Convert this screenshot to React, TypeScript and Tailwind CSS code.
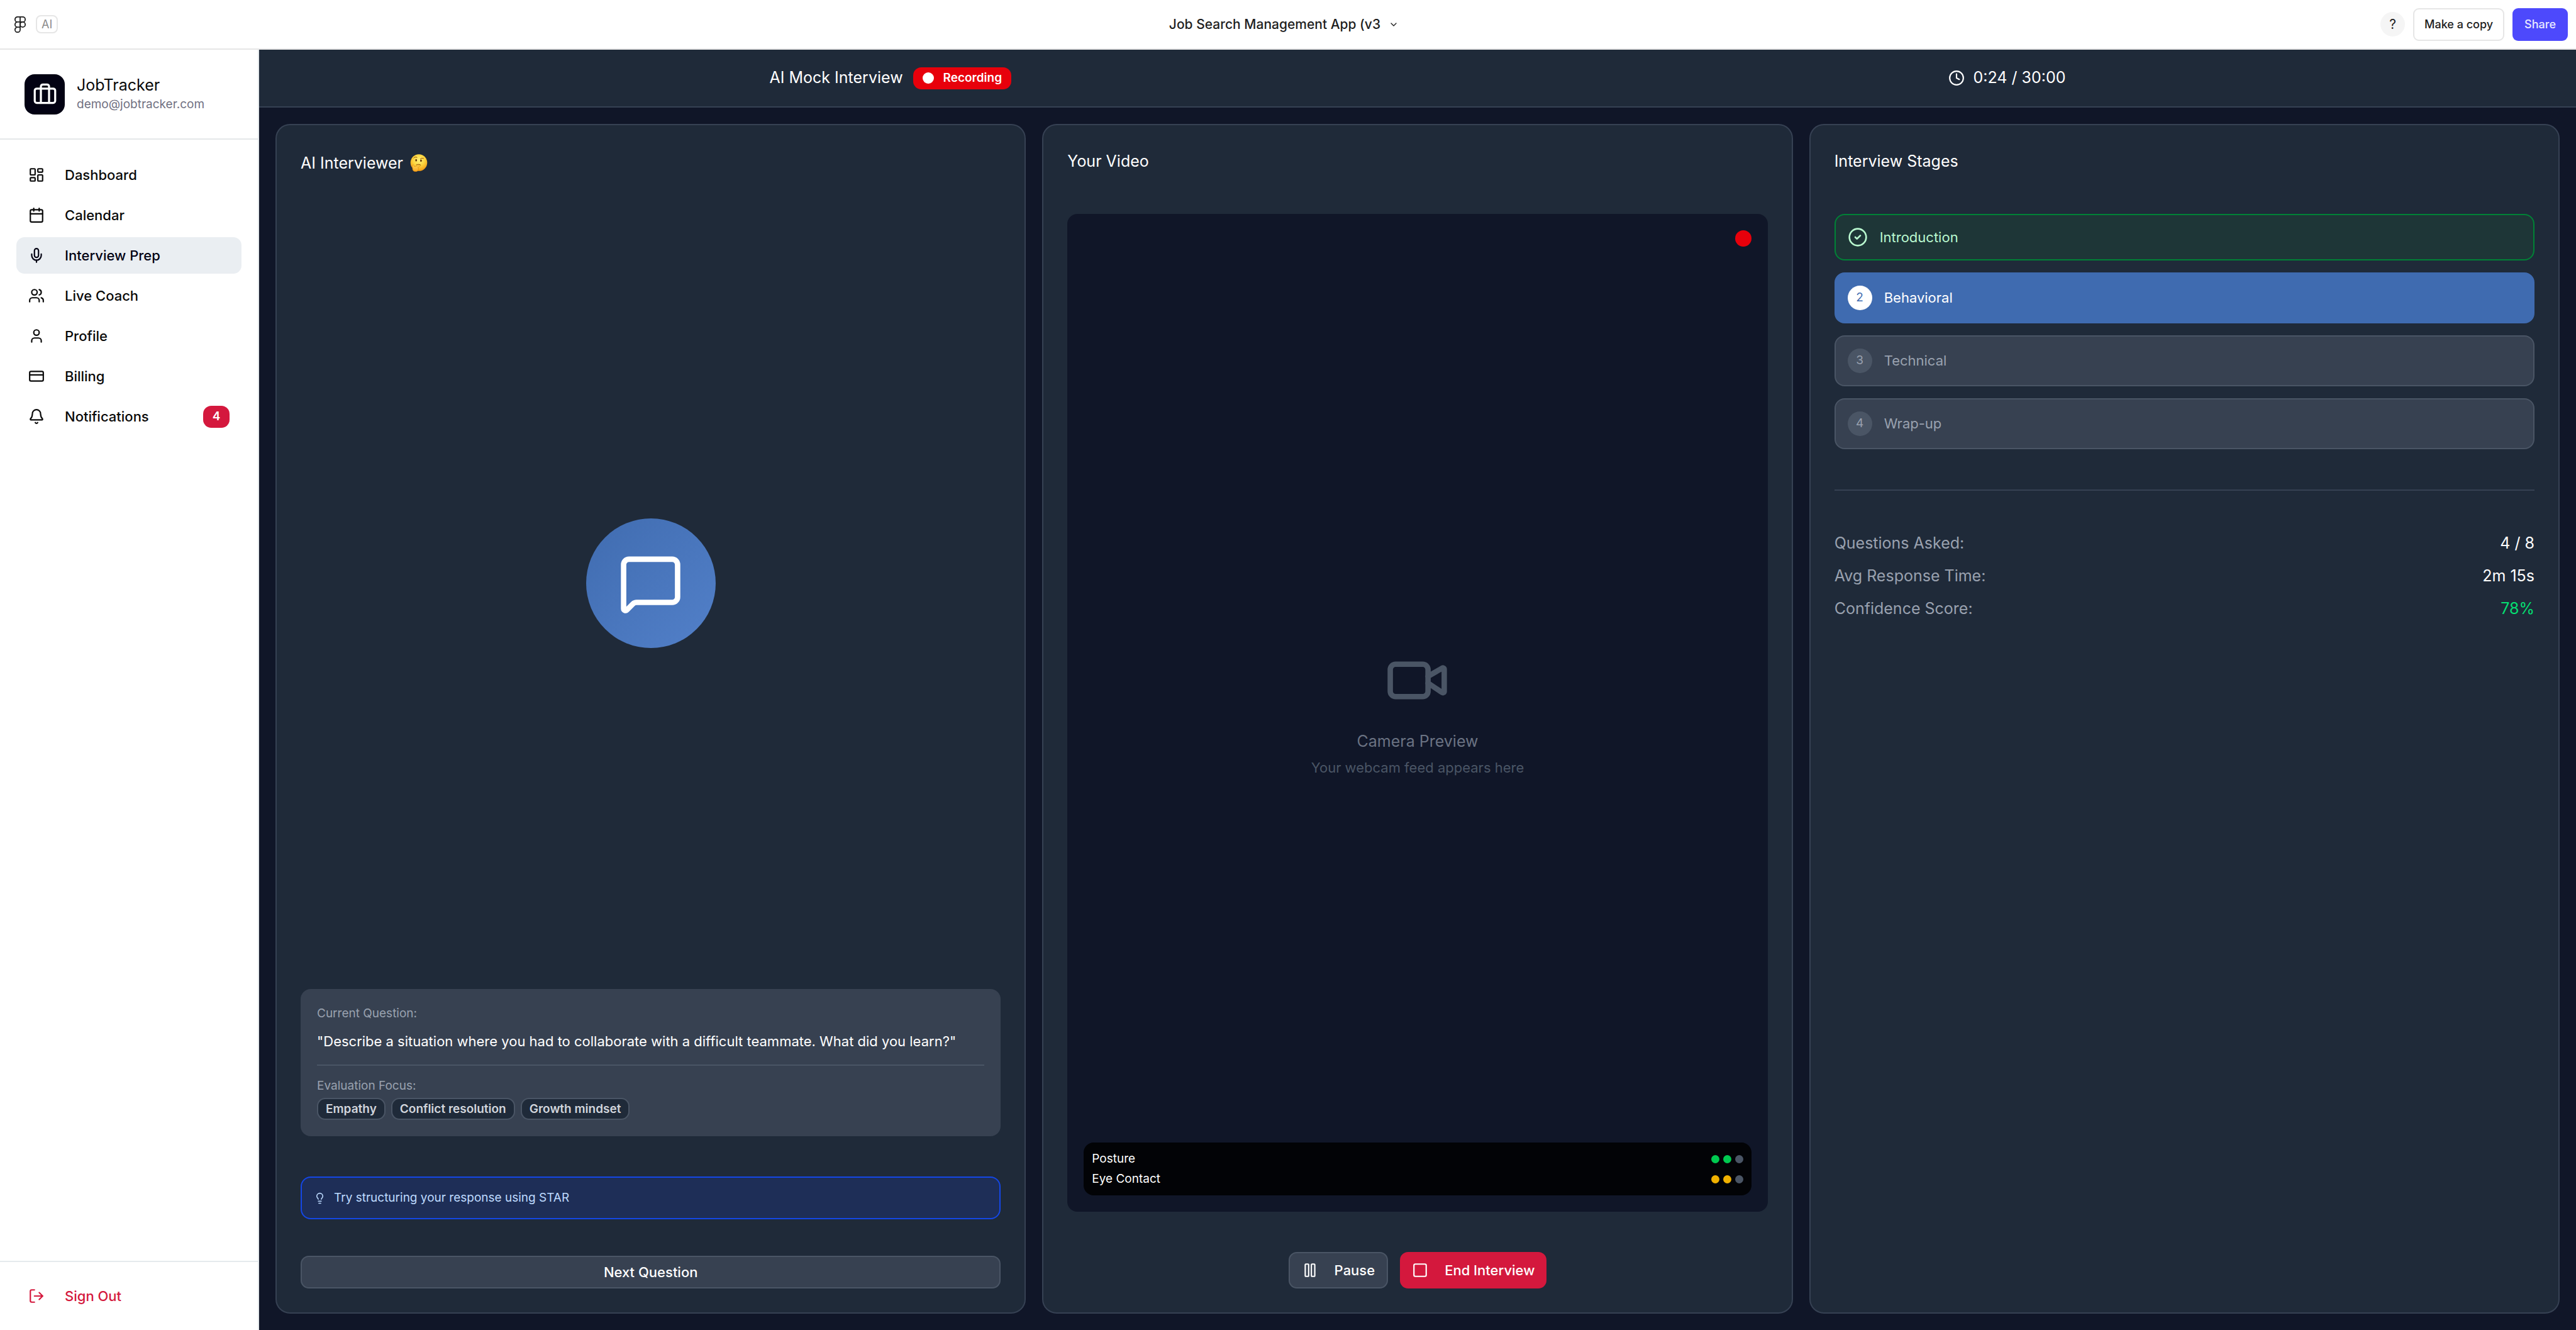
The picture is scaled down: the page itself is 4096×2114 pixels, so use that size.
import React from "react";
import {
  Bell,
  Briefcase,
  Calendar,
  ChevronDown,
  CircleCheck,
  Clock,
  CreditCard,
  LayoutDashboard,
  Lightbulb,
  LogOut,
  MessageSquare,
  Mic,
  Pause,
  Square,
  User,
  Users,
  Video,
} from "lucide-react";

const navItems = [
  { label: "Dashboard", Icon: LayoutDashboard },
  { label: "Calendar", Icon: Calendar },
  { label: "Interview Prep", Icon: Mic, active: true },
  { label: "Live Coach", Icon: Users },
  { label: "Profile", Icon: User },
  { label: "Billing", Icon: CreditCard },
  { label: "Notifications", Icon: Bell, badge: 4 },
];

function FigmaMark() {
  return (
    <svg className="h-[26px] w-[18px]" viewBox="0 0 22 32" fill="none" stroke="#1e1e1e" strokeWidth="2.2" aria-hidden="true">
      <path d="M11 1H6a5 5 0 0 0 0 10h5zM11 1h5a5 5 0 0 1 0 10h-5zM11 11H6a5 5 0 0 0 0 10h5zM11 21H6a5 5 0 1 0 5 5z" />
      <circle cx="16" cy="16" r="5" />
    </svg>
  );
}

function ThinkingFace() {
  return (
    <svg className="h-[28px] w-[28px]" viewBox="0 0 28 28" role="img" aria-label="Thinking face">
      <defs>
        <radialGradient id="face" cx="0.5" cy="0.35" r="0.65">
          <stop offset="0" stopColor="#fff27a" />
          <stop offset="0.55" stopColor="#fdd33c" />
          <stop offset="1" stopColor="#f59a12" />
        </radialGradient>
        <linearGradient id="hand" x1="0" y1="0" x2="0" y2="1">
          <stop offset="0" stopColor="#ffd95a" />
          <stop offset="1" stopColor="#f9a21b" />
        </linearGradient>
      </defs>
      <circle cx="14" cy="13.500" r="13.300" fill="url(#face)" />
      <path d="M5.800 6.200c1.200-1.700 3.300-2 5.200-1M16.500 7.400c1.600-1 3.500-1.200 5-.6" fill="none" stroke="#8a4b0b" strokeWidth="1" strokeLinecap="round" />
      <ellipse cx="9.700" cy="9.700" rx="1.400" ry="1.900" fill="#6b3a08" />
      <ellipse cx="17.400" cy="10.300" rx="1.400" ry="1.900" fill="#6b3a08" />
      <path d="M10 17c2-1.200 5-1 6.800.2" fill="none" stroke="#8a4b0b" strokeWidth="1" strokeLinecap="round" />
      <path d="M4.200 17.500c.7-.9 1.800-.6 2.100.5l.5 1.700c2.500-.3 5.600-1.300 8.200-2 1.400-.3 1.800 1.200.6 1.800l-3.300 1.600c1.300.8 1.300 2.200.8 3.300-.5 2-1.800 3.300-4.200 3.300-3 0-4.900-1.600-4.900-4.400 0-2 .1-4.100.2-5.800z" fill="url(#hand)" stroke="#e08a10" strokeWidth="0.700" />
    </svg>
  );
}

function TopBar() {
  return (
    <header className="grid h-[79px] grid-cols-3 items-center border-b-2 border-[#e6e6e6] bg-white px-[13px]">
      <div className="flex items-center gap-[16px] pl-[10px]">
        <FigmaMark />
        <span className="rounded-[8px] border-2 border-[#e6e6e6] px-[7px] text-[18px] leading-[25px] text-[#8c8c8c]">AI</span>
      </div>
      <button className="flex items-center justify-center gap-[13px] pr-[13px] text-[21px] font-medium text-[#1e1e1e]">
        Job Search Management App (v3
        <ChevronDown className="h-[16px] w-[16px]" />
      </button>
      <div className="flex items-center justify-end gap-[13px]">
        <button className="h-[39px] w-[39px] rounded-full bg-[#f5f5f5] text-[21px] text-[#1e1e1e]">?</button>
        <button className="h-[52px] rounded-[9px] border-2 border-[#e6e6e6] px-[16px] text-[18px] font-medium text-[#1e1e1e]">Make a copy</button>
        <button className="h-[52px] rounded-[9px] bg-[#4d49fc] px-[19px] text-[18px] font-medium text-[#e9e9ff]">Share</button>
      </div>
    </header>
  );
}

function Sidebar() {
  return (
    <aside className="flex w-[412px] shrink-0 flex-col border-r-2 border-[#e5eaed] bg-white">
      <div className="flex items-center gap-[19px] border-b-2 border-[#e5e7e9] p-[39px] pb-[38px]">
        <div className="flex h-[64px] w-[64px] items-center justify-center rounded-[16px] bg-[#030213] text-white">
          <Briefcase className="h-[39px] w-[39px]" />
        </div>
        <div>
          <div className="text-[25px] leading-[32px] text-[#0a0a0a]">JobTracker</div>
          <div className="text-[19px] leading-[30px] text-[#717182]">demo@jobtracker.com</div>
        </div>
      </div>
      <nav className="flex flex-1 flex-col gap-[6px] px-[26px] pt-[27px]">
        {navItems.map(({ label, Icon, active, badge }) => (
          <a
            key={label}
            href="#"
            className={
              active
                ? "flex h-[58px] items-center gap-[32px] rounded-[13px] bg-[#eaeef2] px-[19px] text-[#030213]"
                : "flex h-[58px] items-center gap-[32px] rounded-[13px] px-[19px] text-[#0a0a0a]"
            }
          >
            <Icon className="h-[26px] w-[26px]" />
            <span className="flex-1 text-[22px] font-medium">{label}</span>
            {badge && (
              <span className="flex h-[35px] w-[42px] items-center justify-center rounded-[13px] bg-[#d4183d] text-[19px] font-semibold text-white">
                {badge}
              </span>
            )}
          </a>
        ))}
      </nav>
      <div className="border-t-2 border-[#e5eaed] px-[26px] py-[25px]">
        <button className="flex h-[58px] w-full items-center gap-[32px] px-[19px] text-[#d4183d]">
          <LogOut className="h-[26px] w-[26px]" />
          <span className="text-[22px] font-medium">Sign Out</span>
        </button>
      </div>
    </aside>
  );
}

function Card({ title, extra, children }: { title: string; extra?: React.ReactNode; children: React.ReactNode }) {
  return (
    <section className="flex flex-col rounded-[23px] border-2 border-[#364153] bg-[#1f2a39] px-[38px] pb-[38px]">
      <h2 className="flex items-center gap-[11px] pt-[40px] pb-[67px] text-[25px] leading-[34px] text-white">
        {title}
        {extra}
      </h2>
      {children}
    </section>
  );
}

function InterviewerCard() {
  return (
    <Card title="AI Interviewer" extra={<span className="flex h-[40px] items-center"><ThinkingFace /></span>}>
      <div className="flex flex-1 items-center justify-center">
        <div className="flex h-[206px] w-[206px] items-center justify-center rounded-full bg-linear-to-br from-[#406cb0] to-[#5280c9] text-white">
          <MessageSquare className="h-[103px] w-[103px]" />
        </div>
      </div>
      <div className="mt-[64px] rounded-[16px] bg-[#374151] p-[26px]">
        <p className="text-[19px] leading-[26px] text-[#99a1af]">Current Question:</p>
        <p className="mt-[13px] text-[22px] leading-[37px] text-white">
          "Describe a situation where you had to collaborate with a difficult teammate. What did you learn?"
        </p>
        <div className="mt-[18px] border-t-2 border-[#4a5565] pt-[19px]">
          <p className="text-[19px] leading-[26px] text-[#99a1af]">Evaluation Focus:</p>
          <div className="mt-[6px] flex gap-[9px]">
            {["Empathy", "Conflict resolution", "Growth mindset"].map((tag) => (
              <span key={tag} className="rounded-[13px] border-2 border-[#4a5565] bg-[#1f2a39] px-[12px] text-[19px] leading-[31px] font-semibold text-[#d1d5dc]">
                {tag}
              </span>
            ))}
          </div>
        </div>
      </div>
      <div className="mt-[64px] flex h-[68px] items-center gap-[13px] rounded-[16px] border-2 border-[#1447e6] bg-[#1e2e57] px-[19px] text-[19px] text-[#bedbff]">
        <Lightbulb className="h-[19px] w-[19px]" />
        Try structuring your response using STAR
      </div>
      <button className="mt-[58px] h-[52px] rounded-[13px] border-2 border-[#4a5565] bg-[#374151] text-[22px] font-medium text-white">
        Next Question
      </button>
    </Card>
  );
}

const metrics = [
  { label: "Posture", dots: ["bg-[#00c950]", "bg-[#00c950]", "bg-[#4a5565]"] },
  { label: "Eye Contact", dots: ["bg-[#f0b100]", "bg-[#f0b100]", "bg-[#4a5565]"] },
];

function VideoCard() {
  return (
    <Card title="Your Video">
      <div className="relative flex flex-1 flex-col items-center justify-center rounded-[16px] bg-[#101628]">
        <Video className="h-[103px] w-[103px] text-[#4a5565]" />
        <p className="mt-[26px] text-[25px] leading-[39px] text-[#6a7282]">Camera Preview</p>
        <p className="mt-[6px] text-[22px] leading-[32px] text-[#4a5565]">Your webcam feed appears here</p>
        <span className="absolute top-[26px] right-[26px] h-[26px] w-[26px] rounded-full bg-[#e7000b]" />
        <div className="absolute right-[26px] bottom-[26px] left-[26px] rounded-[16px] bg-[#020306] px-[13px] py-[10px]">
          {metrics.map(({ label, dots }) => (
            <div key={label} className="flex items-center justify-between text-[19px] leading-[32px] text-white">
              {label}
              <div className="flex gap-[6px]">
                {dots.map((dot, i) => (
                  <span key={i} className={`h-[13px] w-[13px] rounded-full ${dot}`} />
                ))}
              </div>
            </div>
          ))}
        </div>
      </div>
      <div className="mt-[64px] flex justify-center gap-[19px] text-[22px] font-medium text-white">
        <button className="flex h-[58px] items-center gap-[26px] rounded-[13px] border-2 border-[#4a5565] bg-[#374151] px-[19px]">
          <Pause className="h-[26px] w-[26px]" />
          Pause
        </button>
        <button className="flex h-[58px] items-center gap-[26px] rounded-[13px] bg-[#d4183d] px-[19px]">
          <Square className="h-[26px] w-[26px]" />
          End Interview
        </button>
      </div>
    </Card>
  );
}

const stats = [
  { label: "Questions Asked:", value: "4 / 8", tone: "text-white" },
  { label: "Avg Response Time:", value: "2m 15s", tone: "text-white" },
  { label: "Confidence Score:", value: "78%", tone: "text-[#05df72]" },
];

function StagesCard() {
  return (
    <Card title="Interview Stages">
      <ol className="flex flex-col gap-[19px] text-[22px]">
        <li className="flex h-[74px] items-center gap-[19px] rounded-[16px] border-2 border-[#008236] bg-[#1e3637] px-[19px] text-[#b9f8cf]">
          <CircleCheck className="h-[32px] w-[32px]" />
          Introduction
        </li>
        <li className="flex h-[81px] items-center gap-[19px] rounded-[16px] border-2 border-[#3f6bb0] bg-[#3f6bb0] px-[19px] text-white">
          <span className="flex h-[39px] w-[39px] items-center justify-center rounded-full bg-white text-[19px] text-[#3f6bb0]">2</span>
          Behavioral
        </li>
        <li className="flex h-[81px] items-center gap-[19px] rounded-[16px] border-2 border-[#4a5565] bg-[#374151] px-[19px] text-[#99a1af]">
          <span className="flex h-[39px] w-[39px] items-center justify-center rounded-full bg-[#4a5565] text-[19px]">3</span>
          Technical
        </li>
        <li className="flex h-[81px] items-center gap-[19px] rounded-[16px] border-2 border-[#4a5565] bg-[#374151] px-[19px] text-[#99a1af]">
          <span className="flex h-[39px] w-[39px] items-center justify-center rounded-full bg-[#4a5565] text-[19px]">4</span>
          Wrap-up
        </li>
      </ol>
      <dl className="mt-[64px] flex flex-col gap-[13px] border-t-2 border-[#364153] pt-[64px] text-[25px] leading-[39px]">
        {stats.map(({ label, value, tone }) => (
          <div key={label} className="flex justify-between">
            <dt className="text-[#99a1af]">{label}</dt>
            <dd className={tone}>{value}</dd>
          </div>
        ))}
      </dl>
    </Card>
  );
}

export default function App() {
  return (
    <div className="flex min-h-screen flex-col font-[Inter,sans-serif]">
      <TopBar />
      <div className="flex flex-1">
        <Sidebar />
        <main className="flex flex-1 flex-col bg-[#101628]">
          <div className="h-[92px] border-b-2 border-[#364153] bg-[#1f2a39]">
            <div className="mx-auto flex h-full max-w-[2061px] items-center justify-between text-[25px] text-white">
              <div className="flex items-center gap-[16px]">
                <h1>AI Mock Interview</h1>
                <span className="flex h-[35px] items-center gap-[15px] rounded-[13px] bg-[#e7000b] px-[15px] text-[19px] font-semibold">
                  <span className="h-[18px] w-[18px] rounded-full bg-white" />
                  Recording
                </span>
              </div>
              <div className="flex items-center gap-[13px]">
                <Clock className="h-[26px] w-[26px]" />
                0:24 / 30:00
              </div>
            </div>
          </div>
          <div className="grid flex-1 grid-cols-3 gap-[26px] p-[26px]">
            <InterviewerCard />
            <VideoCard />
            <StagesCard />
          </div>
        </main>
      </div>
    </div>
  );
}
